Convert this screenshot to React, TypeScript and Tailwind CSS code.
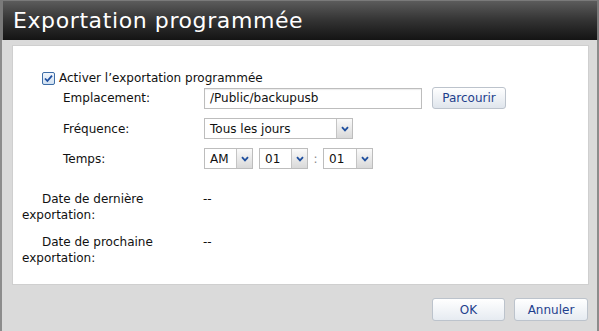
import React from 'react';

const font = { fontFamily: '"DejaVu Sans", Verdana, sans-serif' };

function Arrow() {
  return (
    <div className="flex h-full w-[16px] items-center justify-center border-l border-[#c4c4c4] bg-gradient-to-b from-[#fafafa] to-[#d9d9d9]">
      <svg width="8" height="6" viewBox="0 0 8 6">
        <path d="M1 1.2 L4 4.4 L7 1.2" fill="none" stroke="#1f4f9e" strokeWidth="1.8" />
      </svg>
    </div>
  );
}

function Select({ value, width }: { value: string; width: string }) {
  return (
    <div className={`flex h-[21px] ${width} items-stretch border border-[#bdbdbd] bg-white`}>
      <div className="flex flex-1 items-center pl-[5px] text-[12px] text-[#111]">{value}</div>
      <Arrow />
    </div>
  );
}

function Button({ label, width }: { label: string; width: string }) {
  return (
    <div className={`flex h-[23px] ${width} items-center justify-center rounded-[3px] border border-[#bcc3cc] bg-gradient-to-b from-white to-[#e6ebf1] text-[12px] text-[#1e3f8d]`}>
      {label}
    </div>
  );
}

export default function App() {
  return (
    <div className="flex h-[331px] w-[599px] flex-col overflow-hidden bg-[#dadada]" style={font}>
      {/* Title bar */}
      <div className="flex h-[40px] items-center border-l-[3px] border-r-[2px] border-t border-[#7a7a7a] bg-gradient-to-b from-[#5c5c5c] via-[#333] to-[#141414] pl-[10px]">
        <span className="text-[22px] leading-none tracking-[0.6px] text-white">Exportation programmée</span>
      </div>

      <div className="flex flex-1 flex-col border-l-2 border-r-2 border-[#8c8c8c]">
        {/* White panel */}
        <div className="ml-[10px] mr-[8px] mt-[5px] h-[240px] border border-[#cfcfcf] bg-white text-[12px] text-[#111]">
          <div className="ml-[29px] mt-[23px] flex items-center gap-[4px]">
            <svg width="13" height="13" viewBox="0 0 13 13">
              <defs>
                <linearGradient id="cb" x1="0" y1="0" x2="0" y2="1">
                  <stop offset="0" stopColor="#f3f7fc" />
                  <stop offset="1" stopColor="#cfdff0" />
                </linearGradient>
              </defs>
              <rect x="0.5" y="0.5" width="12" height="12" rx="1.5" fill="url(#cb)" stroke="#3e6da6" />
              <path d="M3 6.5 L5.4 9 L10 3.6" fill="none" stroke="#1f4fa0" strokeWidth="1.8" />
            </svg>
            <span>Activer l’exportation programmée</span>
          </div>

          <div className="ml-[50px] mt-[0px] flex flex-col gap-[9px]">
            <div className="flex items-center">
              <span className="w-[141px]">Emplacement:</span>
              <div className="flex h-[21px] w-[218px] items-center border border-[#bdbdbd] pl-[5px] shadow-[inset_0_1px_1px_rgba(0,0,0,0.08)]">
                /Public/backupusb
              </div>
              <div className="ml-[10px] flex h-[22px] w-[74px] items-center justify-center rounded-[3px] border border-[#bcc3cc] bg-gradient-to-b from-white to-[#dfe5ec] text-[#1e3f8d]">
                Parcourir
              </div>
            </div>
            <div className="flex items-center">
              <span className="w-[141px]">Fréquence:</span>
              <Select value="Tous les jours" width="w-[149px]" />
            </div>
            <div className="flex items-center">
              <span className="w-[141px]">Temps:</span>
              <Select value="AM" width="w-[49px]" />
              <div className="ml-[6px]">
                <Select value="01" width="w-[49px]" />
              </div>
              <span className="w-[15px] text-center text-[#888]">:</span>
              <Select value="01" width="w-[50px]" />
            </div>
          </div>

          <div className="ml-[9px] mt-[22px] flex flex-col gap-[11px] leading-[16px]">
            <div className="flex">
              <span className="w-[172px] indent-5">Date de dernière exportation:</span>
              <span className="ml-[9px]">--</span>
            </div>
            <div className="flex">
              <span className="w-[172px] indent-5">Date de prochaine exportation:</span>
              <span className="ml-[9px]">--</span>
            </div>
          </div>
        </div>

        {/* Footer */}
        <div className="mr-[9px] mt-[13px] flex justify-end gap-[9px]">
          <Button label="OK" width="w-[73px]" />
          <Button label="Annuler" width="w-[74px]" />
        </div>
      </div>
    </div>
  );
}
